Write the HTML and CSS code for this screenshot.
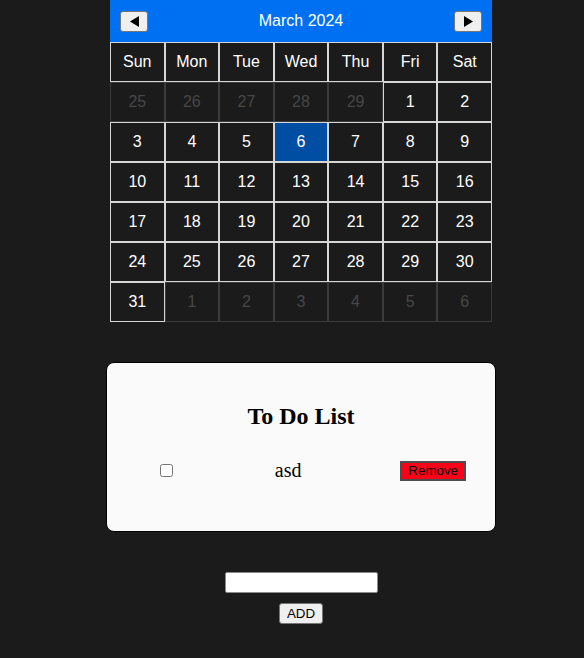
FILE: index.html
```html
<!DOCTYPE html>
<html lang="en">
<head>
<meta charset="utf-8">
<title>Calendar and To Do</title>
<link rel="stylesheet" href="styles.css">
</head>
<body>
<div class="page">
  <div class="calendar">
    <div class="cal-header">
      <button class="nav-btn" aria-label="Previous month"><svg width="9" height="11" viewBox="0 0 9 11"><polygon points="9,0 9,11 0,5.5" fill="#000"/></svg></button>
      <span class="cal-title">March 2024</span>
      <button class="nav-btn" aria-label="Next month"><svg width="9" height="11" viewBox="0 0 9 11"><polygon points="0,0 0,11 9,5.5" fill="#000"/></svg></button>
    </div>
    <div class="cal-grid">
      <div class="cell">Sun</div><div class="cell">Mon</div><div class="cell">Tue</div><div class="cell">Wed</div><div class="cell">Thu</div><div class="cell">Fri</div><div class="cell">Sat</div>
      <div class="cell other">25</div><div class="cell other">26</div><div class="cell other">27</div><div class="cell other">28</div><div class="cell other">29</div><div class="cell">1</div><div class="cell">2</div>
      <div class="cell">3</div><div class="cell">4</div><div class="cell">5</div><div class="cell today">6</div><div class="cell">7</div><div class="cell">8</div><div class="cell">9</div>
      <div class="cell">10</div><div class="cell">11</div><div class="cell">12</div><div class="cell">13</div><div class="cell">14</div><div class="cell">15</div><div class="cell">16</div>
      <div class="cell">17</div><div class="cell">18</div><div class="cell">19</div><div class="cell">20</div><div class="cell">21</div><div class="cell">22</div><div class="cell">23</div>
      <div class="cell">24</div><div class="cell">25</div><div class="cell">26</div><div class="cell">27</div><div class="cell">28</div><div class="cell">29</div><div class="cell">30</div>
      <div class="cell">31</div><div class="cell other">1</div><div class="cell other">2</div><div class="cell other">3</div><div class="cell other">4</div><div class="cell other">5</div><div class="cell other">6</div>
    </div>
  </div>

  <div class="todo">
    <h2 class="todo-title">To Do List</h2>
    <div class="todo-row">
      <input type="checkbox" class="todo-check">
      <span class="todo-text">asd</span>
      <button class="remove-btn">Remove</button>
    </div>
  </div>

  <div class="add-form">
    <input type="text" class="add-input">
    <button class="add-btn">ADD</button>
  </div>
</div>
</body>
</html>
```
FILE: styles.css
```css
html, body {
  margin: 0;
  padding: 0;
  background: #1b1b1b;
}

.page {
  width: 390px;
  margin-left: 106px;
  display: flex;
  flex-direction: column;
}

.calendar {
  width: 382px;
  margin: 0 4px;
  font-family: "Liberation Sans", Arial, sans-serif;
}

.cal-header {
  height: 42px;
  box-sizing: border-box;
  background: #0070f3;
  padding: 0 10px;
  display: flex;
  align-items: center;
  justify-content: space-between;
}

.nav-btn {
  width: 28px;
  height: 21px;
  padding: 0;
  box-sizing: border-box;
  background: #efefef;
  border: 1px solid #767676;
  border-radius: 3px;
  display: flex;
  align-items: center;
  justify-content: center;
}

.cal-title {
  color: #fff;
  font-size: 16px;
}

.cal-grid {
  display: grid;
  grid-template-columns: repeat(7, 1fr);
}

.cell {
  height: 40px;
  box-sizing: border-box;
  border: 1px solid #d6d6d6;
  background: #1b1b1b;
  color: #fff;
  font-size: 16px;
  display: flex;
  align-items: center;
  justify-content: center;
}

.cell.other {
  color: #474747;
  border-color: #3b3b3b;
}

.cell.today {
  background: #004ea3;
}

.todo {
  margin-top: 40px;
  background: #fafafa;
  border: 1px solid #000;
  border-radius: 8px;
  padding: 20px;
  font-family: "Liberation Serif", "Times New Roman", serif;
}

.todo-title {
  margin: 19px 0;
  font-size: 24px;
  line-height: 28px;
  text-align: center;
  font-weight: bold;
}

.todo-row {
  display: flex;
  align-items: center;
  justify-content: space-between;
  margin: 0 9px 19px 29px;
  padding: 10px 0;
}

.todo-check {
  width: 13px;
  height: 13px;
  margin: 3px 3px 3px 4px;
}

.todo-text {
  font-size: 20px;
  line-height: 23px;
}

.remove-btn {
  background: #ff0018;
  color: #000;
  border: 2px solid #4d4d4d;
  padding: 1px 6px;
  font-family: "Liberation Sans", Arial, sans-serif;
  font-size: 13.33px;
  line-height: 14px;
}

.add-form {
  margin-top: 40px;
  display: flex;
  flex-direction: column;
  align-items: center;
  gap: 10px;
}

.add-input {
  width: 153px;
  height: 21px;
  box-sizing: border-box;
  border: 1px solid #8a8a8a;
  border-radius: 2px;
  background: #fff;
  padding: 1px 2px;
  font-family: "Liberation Sans", Arial, sans-serif;
  font-size: 13.33px;
}

.add-btn {
  width: 44px;
  height: 21px;
  box-sizing: border-box;
  padding: 1px 0;
  background: #efefef;
  border: 1px solid #767676;
  border-radius: 3px;
  font-family: "Liberation Sans", Arial, sans-serif;
  font-size: 13.33px;
  color: #000;
}
```
